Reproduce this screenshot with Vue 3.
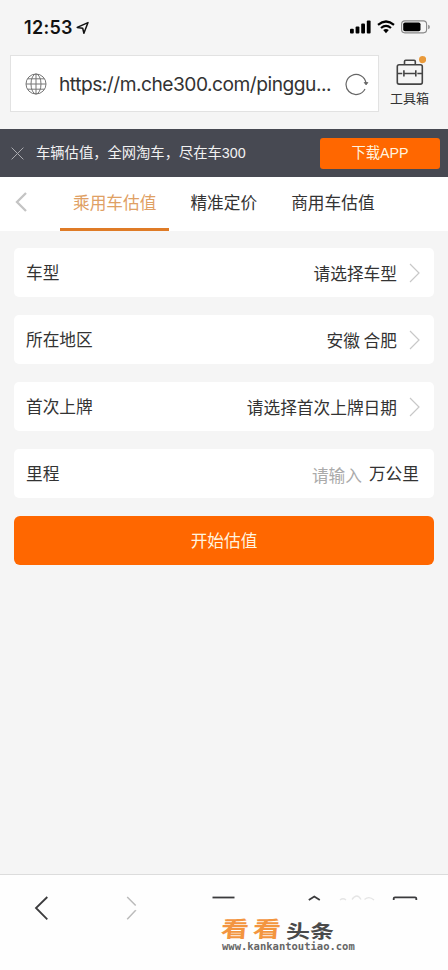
<script setup>
const tabs = ['乘用车估值', '精准定价', '商用车估值']
const rows = [
  { label: '车型', value: '请选择车型' },
  { label: '所在地区', value: '安徽 合肥' },
  { label: '首次上牌', value: '请选择首次上牌日期' },
]
</script>

<template>
  <div class="screen">
    <header class="status">
      <div class="clock">
        <span class="time">12:53</span>
        <svg width="14" height="14" viewBox="0 0 14 14"><path d="M1.2 6.4 12 1.6 7.9 12.2 6.7 7.2Z" fill="none" stroke="#111" stroke-width="1.5" stroke-linejoin="round" /></svg>
      </div>
      <div class="indicators">
        <svg width="21" height="14" viewBox="0 0 21 14" fill="#000"><rect x="0" y="8.7" width="3.8" height="4.8" rx="1" /><rect x="5.6" y="6.4" width="3.8" height="7.1" rx="1" /><rect x="11.2" y="3.6" width="3.8" height="9.9" rx="1" /><rect x="16.8" y="0.6" width="3.8" height="12.9" rx="1" /></svg>
        <svg class="wifi" width="18" height="14" viewBox="0 0 18 14"><g fill="none" stroke="#000" stroke-width="2.2"><path d="M1 4.9Q9-1.9 17 4.9" /><path d="M4 8Q9 3.8 14 8" /></g><path d="M6.2 10.1Q9 7.8 11.8 10.1L9 13.2Z" /></svg>
        <svg class="battery" width="30" height="14" viewBox="0 0 30 14"><rect x=".6" y=".9" width="25" height="12" rx="3.3" fill="none" stroke="#888" stroke-width="1.1" /><rect x="2.2" y="2.5" width="17.3" height="8.8" rx="1.8" /><path d="M27 4.8Q29 5.2 29 7T27 9.2Z" fill="#999" /></svg>
      </div>
    </header>

    <div class="browser">
      <div class="address">
        <svg class="globe" width="22" height="22" viewBox="0 0 22 22" fill="none" stroke="#777" stroke-width="1"><circle cx="11" cy="11" r="10" /><ellipse cx="11" cy="11" rx="5" ry="10" /><path d="M11 1V21M1 11H21M2.5 5.8H19.5M2.5 16.2H19.5" /></svg>
        <span class="url">https://m.che300.com/pinggu...</span>
        <svg class="reload" width="24" height="24" viewBox="0 0 24 24" fill="none" stroke="#666" stroke-width="1.2"><path d="M20 17A10 10 0 1 1 21 11.4" /><path d="M19.2 10.5 21.1 12.9 22.9 10.5Z" fill="#666" stroke-width=".8" /></svg>
      </div>
      <div class="tools">
        <svg width="32" height="32" viewBox="0 0 32 32" fill="none" stroke="#444" stroke-width="1.6"><rect x="3.3" y="9.7" width="25" height="19.4" rx="1.8" /><path d="M10.5 9.5V6.4Q10.5 5.2 11.7 5.2H20.1Q21.3 5.2 21.3 6.4V9.5M3.3 18.5H8.3M9.9 18.5H21.8M23.3 18.5H28.3M9.9 15.3V21.5M21.8 15.3V21.5" /><circle cx="28.6" cy="4.6" r="3.6" fill="#e99a3b" stroke="none" /></svg>
        <span>工具箱</span>
      </div>
    </div>

    <div class="promo">
      <svg class="close" width="13" height="13" viewBox="0 0 13 13" stroke="#aaabb0" stroke-width="1"><path d="M.6.6 12.4 12.4M12.4.6.6 12.4" /></svg>
      <span class="slogan">车辆估值，全网淘车，尽在车300</span>
      <button class="download">下载APP</button>
    </div>

    <nav class="tabs">
      <svg class="back" width="12" height="20" viewBox="0 0 12 20" fill="none" stroke="#c4c4c4" stroke-width="2.3"><path d="M11 1 2 10 11 19" /></svg>
      <span v-for="(tab, i) in tabs" :key="tab" class="tab" :class="{ active: i === 0 }">{{ tab }}</span>
    </nav>

    <main class="form">
      <div v-for="row in rows" :key="row.label" class="row">
        <span class="label">{{ row.label }}</span>
        <span class="value">{{ row.value }}</span>
        <svg class="chevron" width="11" height="20" viewBox="0 0 11 20" fill="none" stroke="#c8c8c8" stroke-width="1.2"><path d="M1 1 10 10 1 19" /></svg>
      </div>
      <div class="row">
        <span class="label">里程</span>
        <span class="hint">请输入</span>
        <span class="unit">万公里</span>
      </div>
      <button class="submit">开始估值</button>
    </main>

    <footer class="toolbar">
      <svg width="448" height="48" viewBox="0 0 448 48" fill="none" stroke="#3b3b3d" stroke-width="1.8">
        <path d="M47.3 22 36 33 47.3 44.3" />
        <path d="M127.2 22 135.7 30.5V35.3L127.2 44.3" stroke="#bbb" stroke-width="1.5" stroke-dasharray="12.02 4.8 20" />
        <path d="M212.5 22.5H234.5" />
        <path d="M308.8 25 314.3 21.5 319.8 25" />
        <g stroke="#e5e5e5" stroke-width="1.3"><path d="M340 25Q343 22.5 346 25M352 24.5Q357 17.5 361 24.5M364.5 24.5Q369 20.5 374 25" /></g>
        <path d="M393.7 25V23.5Q393.7 22.3 395 22.3H415Q416.3 22.3 416.3 23.5V25" />
      </svg>
      <div class="watermark">
        <div class="brand"><span class="look">看看</span><span class="news">头条</span></div>
        <div class="site">www.kankantoutiao.com</div>
      </div>
    </footer>
  </div>
</template>

<style>
body { background: #f5f5f5; }
</style>

<style scoped>
.screen {
  display: flex;
  flex-direction: column;
  width: 448px;
  height: 970px;
  overflow: hidden;
  background: #f5f5f5;
  color: #333;
  font-family: Inter, "Noto Sans CJK SC", sans-serif;
}
.screen * { box-sizing: border-box; }
svg { display: block; flex: none; }
span { white-space: nowrap; }
button { border: 0; padding: 0; color: #fff3df; font-family: "Liberation Sans", "Noto Sans CJK SC", sans-serif; background: #ff6700; }
.status { display: flex; justify-content: space-between; height: 55px; padding: 20px 17px 0 24px; }
.clock { display: flex; height: 15px; align-items: center; gap: 3px; }
.time { font-size: 18px; font-weight: 600; letter-spacing: .3px; color: #111; }
.indicators { display: flex; height: 14px; }
.wifi { margin-left: 6px; }
.battery { margin-left: 6px; }
.browser { display: flex; height: 74px; padding-left: 10px; }
.address { display: flex; align-items: center; width: 369px; height: 57px; padding-left: 14px; border: 1px solid #e2e2e2; background: #fff; }
.url { width: 285px; margin-left: 12px; font-size: 19.2px; letter-spacing: -.5px; line-height: 28px; }
.reload { margin-left: 1px; }
.tools { display: flex; flex-direction: column; align-items: center; width: 61px; }
.tools span { margin-top: 1px; font-family: "Noto Sans CJK SC", sans-serif; font-size: 13px; line-height: 19px; }
.promo { display: flex; align-items: center; height: 48px; padding: 0 8px 0 11px; background: #474952; }
.slogan { margin: -3px 0 0 12px; font-family: "Liberation Sans", "Noto Sans CJK SC", sans-serif; font-size: 14.3px; color: #f2f2f2; }
.download { width: 120px; height: 31px; margin-left: auto; padding-bottom: 3px; border-radius: 3px; font-size: 14.3px; }
.tabs { display: flex; height: 54px; padding-left: 15px; background: #fff; font-family: "Noto Sans CJK SC", sans-serif; font-size: 16.7px; }
.back { margin: 15px 33px 0 0; }
.tab { height: 54px; padding: 0 13px; line-height: 50px; margin-right: 8px; }
.active { border-bottom: 3px solid #df7b26; color: #dfa064; }
.form { display: flex; flex-direction: column; gap: 18px; padding: 17px 14px 0; font-family: "Noto Sans CJK SC", sans-serif; font-size: 16.7px; }
.row { display: flex; align-items: center; height: 49px; padding: 0 15px 0 12px; border-radius: 5px; background: #fff; }
.label { flex: 1; margin-top: -2px; }
.value { margin-right: -1px; }
.chevron { margin: 0 -1px 0 13px; }
.hint { margin-top: 2px; margin-right: 7px; color: #aaa; }
.unit { margin-top: -2px; }
.submit { height: 49px; padding-bottom: 2px; border-radius: 6px; font-size: 16.7px; }
.toolbar { position: relative; height: 96px; margin-top: auto; border-top: 1px solid #dcdcdc; background: #fefefe; }
.watermark { position: absolute; left: 221px; top: 40px; }
.brand { display: flex; align-items: center; height: 26px; font-family: "Noto Sans CJK SC", sans-serif; line-height: 20px; }
.look { font-size: 28px; font-weight: 700; letter-spacing: 4px; color: #f39540; transform: skewX(-5deg) scaleY(.78); }
.news { margin: 3px 0 0 1px; font-size: 24px; font-weight: 700; color: #4a4a4a; transform: scaleY(.76); }
.site { margin: 0 0 0 1px; font-family: "DejaVu Sans Mono", monospace; font-size: 10.5px; font-weight: 700; line-height: 10px; color: #666; }
</style>
